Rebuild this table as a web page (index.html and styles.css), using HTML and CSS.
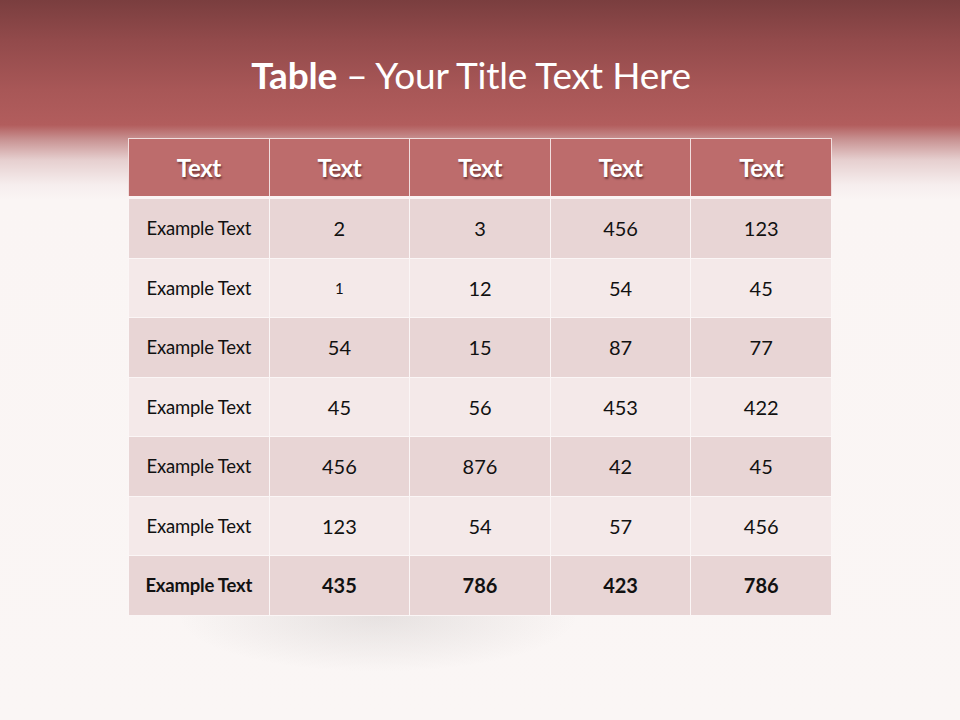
FILE: index.html
```html
<!DOCTYPE html>
<html>
<head>
<meta charset="utf-8">
<link rel="stylesheet" href="styles.css">
</head>
<body>
<div class="slide">
  <header class="title-band">
    <h1 class="title"><b>Table</b> – Your Title Text Here</h1>
  </header>
  <div class="table-area">
    <table class="data">
      <thead>
        <tr><th>Text</th><th>Text</th><th>Text</th><th>Text</th><th>Text</th></tr>
      </thead>
      <tbody>
        <tr class="odd"><td class="label">Example Text</td><td>2</td><td>3</td><td>456</td><td>123</td></tr>
        <tr class="even"><td class="label">Example Text</td><td class="small">1</td><td>12</td><td>54</td><td>45</td></tr>
        <tr class="odd"><td class="label">Example Text</td><td>54</td><td>15</td><td>87</td><td>77</td></tr>
        <tr class="even"><td class="label">Example Text</td><td>45</td><td>56</td><td>453</td><td>422</td></tr>
        <tr class="odd"><td class="label">Example Text</td><td>456</td><td>876</td><td>42</td><td>45</td></tr>
        <tr class="even"><td class="label">Example Text</td><td>123</td><td>54</td><td>57</td><td>456</td></tr>
        <tr class="odd total"><td class="label">Example Text</td><td>435</td><td>786</td><td>423</td><td>786</td></tr>
      </tbody>
    </table>
    <div class="table-shadow"></div>
  </div>
</div>
</body>
</html>
```

FILE: styles.css
```css
html, body {
  margin: 0;
  padding: 0;
}
body {
  width: 960px;
  height: 720px;
  overflow: hidden;
  font-family: "Lato", "Open Sans", sans-serif;
  background:
    linear-gradient(to bottom,
      #7a3e3f 0px,
      #924a4b 40px,
      #a85757 90px,
      #b25d5d 125px,
      #c99494 140px,
      #e6cfcf 160px,
      #f6eeee 185px,
      #faf5f4 200px,
      #faf6f5 720px);
}
.slide {
  display: flex;
  flex-direction: column;
  height: 720px;
}
.title-band {
  height: 138px;
  display: flex;
  justify-content: center;
  padding-top: 53px;
  padding-right: 18px;
  box-sizing: border-box;
}
.title {
  margin: 0;
  font-weight: 400;
  font-size: 37px;
  line-height: 44px;
  color: #ffffff;
  letter-spacing: -0.2px;
}
.title b {
  font-weight: 700;
}
.table-area {
  padding-left: 128px;
}
.data {
  border-collapse: collapse;
  width: 704px;
  table-layout: fixed;
  color: #111;
}
.data th {
  background: #bd6c6c;
  color: #fff;
  font-weight: 700;
  font-size: 24px;
  height: 57px;
  border: 1px solid #f1dede;
  border-bottom: 3px solid #fbf4f4;
  text-shadow: 1px 2px 2px rgba(60, 20, 20, 0.6);
  padding: 0;
  letter-spacing: -0.4px;
}
.data td {
  height: 58.5px;
  text-align: center;
  font-size: 20px;
  border: 1px solid #fbf6f6;
  padding: 0;
}
.data tr.odd td { background: #e8d5d5; }
.data tr.even td { background: #f4e9e9; }
.data td.label {
  font-size: 18.5px;
  letter-spacing: -0.2px;
}
.data td.small {
  font-size: 15px;
}
.data tr.total td {
  font-weight: 700;
}
.table-shadow {
  width: 500px;
  height: 70px;
  background: radial-gradient(ellipse 50% 100% at 50% 0%, rgba(120, 110, 110, 0.15), rgba(120, 110, 110, 0) 80%);
}
```
